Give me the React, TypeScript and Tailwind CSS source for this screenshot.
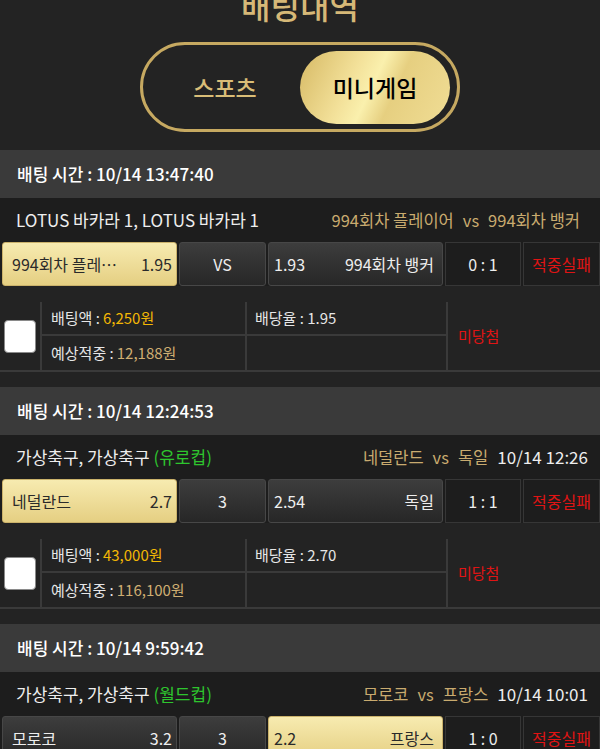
import React from "react";

type Bet = {
  time: string;
  league: string;
  leagueTag?: string;
  home: string;
  homeShort: string;
  away: string;
  matchTime?: string;
  homeOdds: string;
  mid: string;
  awayOdds: string;
  score: string;
  picked: "home" | "away";
  amount: string;
  expected: string;
  rate: string;
};

const bets: Bet[] = [
  {
    time: "10/14 13:47:40",
    league: "LOTUS 바카라 1, LOTUS 바카라 1",
    home: "994회차 플레이어",
    homeShort: "994회차 플레…",
    away: "994회차 뱅커",
    homeOdds: "1.95",
    mid: "VS",
    awayOdds: "1.93",
    score: "0 : 1",
    picked: "home",
    amount: "6,250원",
    expected: "12,188원",
    rate: "1.95",
  },
  {
    time: "10/14 12:24:53",
    league: "가상축구, 가상축구",
    leagueTag: "(유로컵)",
    home: "네덜란드",
    homeShort: "네덜란드",
    away: "독일",
    matchTime: "10/14 12:26",
    homeOdds: "2.7",
    mid: "3",
    awayOdds: "2.54",
    score: "1 : 1",
    picked: "home",
    amount: "43,000원",
    expected: "116,100원",
    rate: "2.70",
  },
  {
    time: "10/14 9:59:42",
    league: "가상축구, 가상축구",
    leagueTag: "(월드컵)",
    home: "모로코",
    homeShort: "모로코",
    away: "프랑스",
    matchTime: "10/14 10:01",
    homeOdds: "3.2",
    mid: "3",
    awayOdds: "2.2",
    score: "1 : 0",
    picked: "away",
    amount: "10,000원",
    expected: "22,000원",
    rate: "2.20",
  },
];

const goldCell =
  "bg-gradient-to-b from-[#f7ebb0] to-[#e5cf82] text-[#2a2a2a] border border-[#cbb26b]";
const darkCell =
  "bg-gradient-to-b from-[#3d3d3d] to-[#272727] text-[#eeeeee] border border-[#474747]";

function BetBlock({ bet }: { bet: Bet }) {
  return (
    <section>
      <div className="flex h-[48px] items-center bg-[#3a3a3a] pl-[17px] text-[17px] font-medium text-white">
        배팅 시간 : {bet.time}
      </div>

      <div
        className={`flex h-[44px] items-center justify-between bg-[#1d1d1d] pl-[16px] text-[17px] ${
          bet.matchTime ? "pr-[12px]" : "pr-[20px]"
        }`}
      >
        <span className="text-[#eeeeee]">
          {bet.league}
          {bet.leagueTag && <span className="text-[#2ec52e]"> {bet.leagueTag}</span>}
        </span>
        <span className="flex items-center gap-[9px]">
          <span className="text-[16.5px] text-[#c9ab6f]">
            {bet.home}
            <span className="mx-[9px]">vs</span>
            {bet.away}
          </span>
          {bet.matchTime && <span className="text-[#eeeeee]">{bet.matchTime}</span>}
        </span>
      </div>

      <div className="flex h-[44px] gap-[2px] bg-[#1d1d1d] pl-[2px] text-[16px]">
        <div
          className={`flex w-[175px] items-center justify-between rounded-[3px] pl-[9px] pr-[4px] ${
            bet.picked === "home" ? goldCell : darkCell
          }`}
        >
          <span>{bet.homeShort}</span>
          <span>{bet.homeOdds}</span>
        </div>
        <div className={`flex w-[87px] items-center justify-center rounded-[3px] ${darkCell}`}>
          {bet.mid}
        </div>
        <div
          className={`flex w-[175px] items-center justify-between rounded-[3px] pl-[5px] pr-[8px] ${
            bet.picked === "away" ? goldCell : darkCell
          }`}
        >
          <span>{bet.awayOdds}</span>
          <span>{bet.away}</span>
        </div>
        <div className="flex w-[76px] items-center justify-center border border-[#363636] bg-[#1d1d1d] text-[#eeeeee]">
          {bet.score}
        </div>
        <div className="flex flex-1 items-center justify-center border border-[#363636] bg-[#1d1d1d] text-[#e01414]">
          적중실패
        </div>
      </div>

      <div className="mt-[16px] flex h-[70px] border-b-2 border-[#3a3a3a] text-[15px]">
        <div className="flex w-[40px] items-center justify-center">
          <div className="h-[33px] w-[32px] rounded-[4px] border border-[#8a8a8a] bg-white" />
        </div>
        <div className="grid w-[408px] grid-cols-[205px_1fr] grid-rows-2 border-x-2 border-[#3a3a3a]">
          <div className="flex items-center border-b-2 border-r-2 border-[#3a3a3a] pl-[9px] text-[#e6e6e6]">
            배팅액 :<span className="ml-[3px] text-[#f2b705]">{bet.amount}</span>
          </div>
          <div className="flex items-center border-b-2 border-[#3a3a3a] pl-[8px] text-[#e6e6e6]">
            배당율 : {bet.rate}
          </div>
          <div className="flex items-center border-r-2 border-[#3a3a3a] pl-[9px] text-[#e6e6e6]">
            예상적중 :<span className="ml-[3px] text-[#cfae72]">{bet.expected}</span>
          </div>
          <div />
        </div>
        <div className="flex flex-1 items-center pl-[10px] text-[#e01414]">미당첨</div>
      </div>

      <div className="h-[15px]" />
    </section>
  );
}

export default function App() {
  return (
    <div
      className="h-[749px] overflow-hidden bg-[#232323]"
      style={{ fontFamily: '"Noto Sans CJK KR", "Noto Sans", sans-serif' }}
    >
      <div className="flex h-[150px] flex-col items-center">
        <h1 className="mt-[-11px] text-[32px] font-medium leading-none text-[#d6b877]">
          배팅내역
        </h1>
        <div className="mt-[21px] flex h-[90px] w-[320px] items-center rounded-full border-[3px] border-[#c6a961] pl-[7px] pr-[7px]">
          <div className="flex flex-1 items-center justify-center text-[23px] font-medium text-[#d9bd77]">
            스포츠
          </div>
          <div className="flex h-[73px] w-[150px] items-center justify-center rounded-full bg-[linear-gradient(115deg,#d6b964_0%,#f3e19a_35%,#faf0ad_48%,#e6cf80_62%,#f0dd95_100%)] text-[23px] font-medium text-black">
            미니게임
          </div>
        </div>
      </div>

      {bets.map((b) => (
        <BetBlock key={b.time} bet={b} />
      ))}
    </div>
  );
}
